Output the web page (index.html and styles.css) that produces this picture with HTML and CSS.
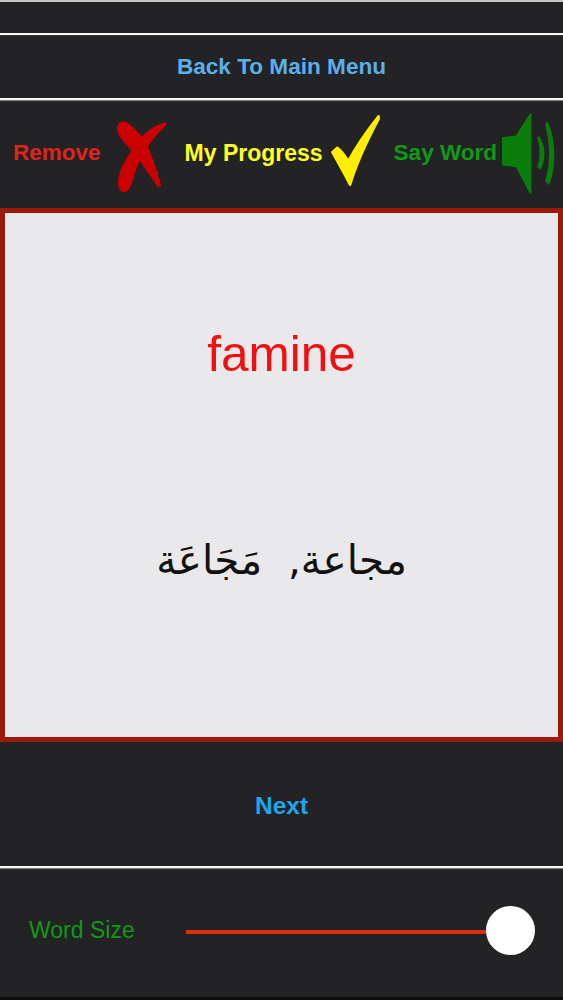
FILE: index.html
```html
<!DOCTYPE html>
<html lang="en">
<head>
	<meta charset="UTF-8">
	<meta name="viewport" content="width=device-width, initial-scale=1.0">
	<title>Flash Cards</title>
	<link rel="stylesheet" href="styles.css">
</head>
<body>
	<div class="top-bar"></div>

	<div class="menu-bar">
		<a class="menu-link" href="#">Back To Main Menu</a>
	</div>

	<div class="actions">
		<div class="action action-remove">
			<span>Remove</span>
			<svg class="icon-x" viewBox="50 50 150 216" width="50" height="72">
				<path d="M54 70C56 54 72 50 88 64L128 104C146 135 164 195 178 243L174 244C155 215 130 180 108 150C90 125 54 100 54 70Z"/>
				<path d="M194 58C165 66 132 88 110 120C87 155 58 195 57 235C57 258 72 266 82 254C95 238 95 205 116 165C133 130 163 90 194 60Z"/>
			</svg>
		</div>
		<div class="action action-progress">
			<span>My Progress</span>
			<svg class="icon-check" viewBox="33 30 147 217" width="49" height="72">
				<path d="M176 34C150 67 110 122 85 169C75 154 62 134 52 129L37 142C52 170 75 208 90 240C105 190 140 110 176 42Z"/>
			</svg>
		</div>
		<div class="action action-say">
			<span>Say Word</span>
			<svg class="icon-speaker" viewBox="548 28 160 242" width="53" height="81">
				<path d="M548 100L590 95L632 28L637 28L637 270L632 270L590 190L548 185Z"/>
				<path d="M654 100L660 96C682 130 680 170 664 198L654 190C664 165 664 130 654 100Z"/>
				<path d="M678 62L685 52C712 105 712 195 690 245L678 232C694 185 694 115 678 62Z"/>
			</svg>
		</div>
	</div>

	<div class="card">
		<div class="card-word">famine</div>
		<div class="card-translation" dir="rtl" lang="ar">مجاعة,&nbsp; مَجَاعَة</div>
	</div>

	<div class="next-bar">
		<a class="next-link" href="#">Next</a>
	</div>

	<div class="size-bar">
		<span class="size-label">Word Size</span>
		<div class="slider">
			<div class="slider-track"></div>
			<div class="slider-knob"></div>
		</div>
	</div>
</body>
</html>
```

FILE: styles.css
```css
body {
	margin: 0;
	height: 1000px;
	overflow: hidden;
	background-color: #232224;
	font-family: "Liberation Sans", Arial, sans-serif;
	font-size: 22.5px;
}
a {
	text-decoration: none;
}
.top-bar {
	height: 31px;
	border-top: 2px solid #c8c8c8;
	border-bottom: 2px solid #f5f5f5;
	box-shadow: 0 0 1px #999999;
}
.menu-bar {
	height: 63px;
	border-bottom: 2px solid #f5f5f5;
	box-shadow: 0 1px 1px #777777;
	display: flex;
	align-items: center;
	justify-content: center;
}
.menu-link {
	color: #5ab0ea;
	font-size: 22.6px;
	font-weight: bold;
}
.actions {
	height: 106px;
	padding: 0 0 2px 13px;
	display: flex;
	align-items: center;
	font-weight: bold;
}
.action {
	display: flex;
	align-items: center;
}
.action-remove {
	color: #e0241b;
}
.action-progress {
	color: #ffff22;
	font-size: 23px;
	margin-left: 18px;
}
.action-say {
	color: #0f9a16;
	margin-left: 14px;
}
.icon-x {
	fill: #cc0000;
	stroke: #cc0000;
	stroke-width: 8;
	stroke-linejoin: round;
	margin: 7px 0 0 16px;
}
.icon-check {
	fill: #ffee00;
	stroke: #ffee00;
	stroke-width: 8;
	stroke-linejoin: round;
	margin: -5px 0 0 8px;
}
.icon-speaker {
	fill: #0a7d0a;
	margin-left: 5px;
}
.card {
	height: 534px;
	box-sizing: border-box;
	border: 5px solid #9c1a0a;
	background-color: #e9e8ea;
	text-align: center;
	padding-top: 111px;
}
.card-word {
	color: #f01010;
	font-size: 49.5px;
	line-height: 60px;
}
.card-translation {
	color: #111111;
	font-family: "DejaVu Sans", sans-serif;
	font-size: 40.5px;
	line-height: 60px;
	margin-top: 146px;
}
.next-bar {
	height: 120px;
	padding-top: 4px;
	border-bottom: 2px solid #f5f5f5;
	box-shadow: 0 1px 1px #777777;
	display: flex;
	align-items: center;
	justify-content: center;
}
.next-link {
	color: #1fa6ee;
	font-size: 24.5px;
	font-weight: bold;
}
.size-bar {
	height: 124px;
	padding: 0 28px 5px 29px;
	border-bottom: 3px solid #0c0c0c;
	display: flex;
	align-items: center;
}
.size-label {
	color: #0f9a16;
	font-size: 23px;
	width: 157px;
}
.slider {
	flex: 1;
	display: flex;
	align-items: center;
}
.slider-track {
	flex: 1;
	height: 4px;
	margin-top: 4px;
	background-color: #d8300e;
}
.slider-knob {
	width: 49px;
	height: 49px;
	border-radius: 50%;
	background-color: white;
}
```
